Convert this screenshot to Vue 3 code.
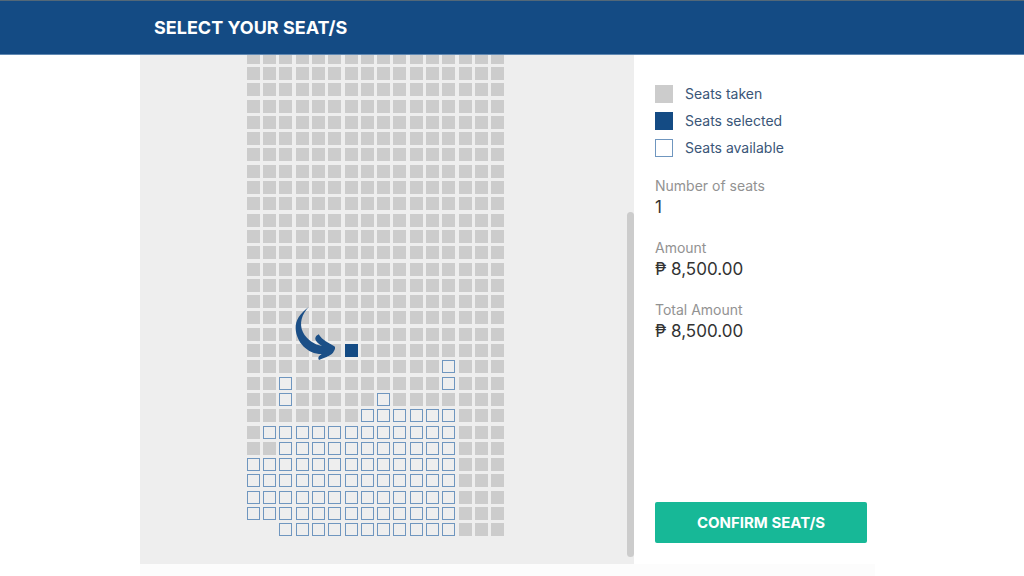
<script setup>
import { ref, computed } from 'vue'

// x = taken, s = selected, o = available, . = no seat
const rows = ref([
  ...Array(18).fill('xxxxxxxxxxxxxxxx'),
  'xxxxxxsxxxxxxxxx',
  'xxxxxxxxxxxxoxxx',
  'xxoxxxxxxxxxoxxx',
  'xxoxxxxxoxxxxxxx',
  'xxxxxxxooooooxxx',
  'xooooooooooooxxx',
  'xxoooooooooooxxx',
  'oooooooooooooxxx',
  'oooooooooooooxxx',
  'oooooooooooooxxx',
  'oooooooooooooxxx',
  '..oooooooooooxxx',
].map((row) => row.split('')))

const kinds = { x: 'taken', s: 'selected', o: 'available', '.': 'empty' }
const legend = ['taken', 'selected', 'available']
const price = 8500

const count = computed(() => rows.value.flat().filter((s) => s === 's').length)
const amount = computed(() =>
  '₱ ' + (count.value * price).toLocaleString('en-US', { minimumFractionDigits: 2 })
)

function toggle(r, c) {
  const seat = rows.value[r][c]
  if (seat === 'o') rows.value[r][c] = 's'
  if (seat === 's') rows.value[r][c] = 'o'
}
</script>

<template>
  <div class="page">
    <header class="bar">
      <h1>SELECT YOUR SEAT/S</h1>
    </header>
    <main class="booking">
      <section class="map" aria-label="Seat map">
        <div class="seats">
          <template v-for="(row, r) in rows" :key="r">
            <button
              v-for="(seat, c) in row"
              :key="c"
              type="button"
              class="seat"
              :class="kinds[seat]"
              :disabled="seat === 'x' || seat === '.'"
              :aria-label="`Row ${r + 1} seat ${c + 1}, ${kinds[seat]}`"
              @click="toggle(r, c)"
            ></button>
          </template>
          <svg class="arrow" viewBox="165 48 123 165" aria-hidden="true">
            <path
              d="M206 51 C180 71 166 90 167 116 C169 156 202 192 245 192 C238 197 232 202 237 210 C250 203 271 199 279 188 C284 181 288 173 283 169 C266 159 247 151 236 133 C227 138 223 145 228 152 C232 159 238 162 246 168 C224 165 200 149 189 127 C176 100 186 73 206 51 Z"
            />
          </svg>
        </div>
        <div class="thumb"></div>
      </section>
      <aside class="summary">
        <ul class="legend">
          <li v-for="kind in legend" :key="kind">
            <span class="swatch" :class="kind"></span>Seats {{ kind }}
          </li>
        </ul>
        <dl>
          <dt>Number of seats</dt>
          <dd>{{ count }}</dd>
          <dt>Amount</dt>
          <dd>{{ amount }}</dd>
          <dt>Total Amount</dt>
          <dd>{{ amount }}</dd>
        </dl>
        <button type="button" class="confirm">CONFIRM SEAT/S</button>
      </aside>
    </main>
    <div class="base"></div>
  </div>
</template>

<style>
body {
  background: #fff;
}
</style>

<style scoped>
.page {
  display: flex;
  flex-direction: column;
  min-height: 100vh;
  font-family: Inter, "Noto Sans", sans-serif;
}
.bar {
  display: flex;
  align-items: center;
  box-sizing: border-box;
  height: 55px;
  padding-left: 154px;
  background: #144b84;
  border-top: 1px solid #536878;
  border-bottom: 1px solid #6088b2;
}
h1 {
  margin: 0;
  color: #fff;
  font-size: 18px;
  line-height: 24px;
  font-weight: 700;
}
.booking {
  display: grid;
  grid-template-columns: 494fr 241fr;
  height: calc(100vh - 67px);
  padding: 0 149px 0 140px;
}
.map {
  position: relative;
  display: flex;
  align-items: flex-end;
  box-sizing: border-box;
  min-height: 0;
  overflow: hidden;
  padding: 0 0 26px 105px;
  background: #eee;
}
.seats {
  position: relative;
  flex: none;
  display: grid;
  grid-template-columns: repeat(16, 1fr);
  grid-template-rows: repeat(30, 1fr);
  place-items: center;
  width: 261px;
  height: 489px;
}
.seat {
  box-sizing: border-box;
  width: 13px;
  height: 13px;
  padding: 0;
  border: 0;
  background: none;
}
.seat.taken,
.swatch.taken {
  background: #ccc;
}
.seat.selected,
.swatch.selected {
  background: #144b84;
}
.seat.available,
.swatch.available {
  border: 1px solid #6f96bf;
}
.seat.empty {
  visibility: hidden;
}
.arrow {
  position: absolute;
  left: 50px;
  top: 257px;
  width: 41px;
  height: 55px;
  fill: #1b4f87;
  pointer-events: none;
}
.thumb {
  position: absolute;
  right: 0;
  top: 157px;
  bottom: 7px;
  width: 7px;
  border-radius: 4px;
  background: #ccc;
}
.summary {
  display: flex;
  flex-direction: column;
  padding: 25px 8px 21px 21px;
}
.legend {
  margin: 0 0 15px;
  padding: 0;
  list-style: none;
  color: #3a5678;
  font-size: 14px;
  line-height: 27px;
}
.legend li {
  display: flex;
  align-items: center;
  gap: 12px;
}
.swatch {
  box-sizing: border-box;
  width: 18px;
  height: 18px;
}
dl {
  margin: 0;
}
dt {
  color: #929292;
  font-size: 14px;
  line-height: 20px;
}
dd {
  margin: 0 0 20px;
  color: #333;
  font-size: 17px;
  line-height: 22px;
}
.confirm {
  margin-top: auto;
  height: 41px;
  border: 0;
  border-radius: 2px;
  background: #17b897;
  color: #fff;
  font-family: inherit;
  font-size: 15px;
  font-weight: 700;
}
.base {
  flex: 1;
  margin: 0 149px 0 140px;
  background: #fcfcfc;
}
</style>
